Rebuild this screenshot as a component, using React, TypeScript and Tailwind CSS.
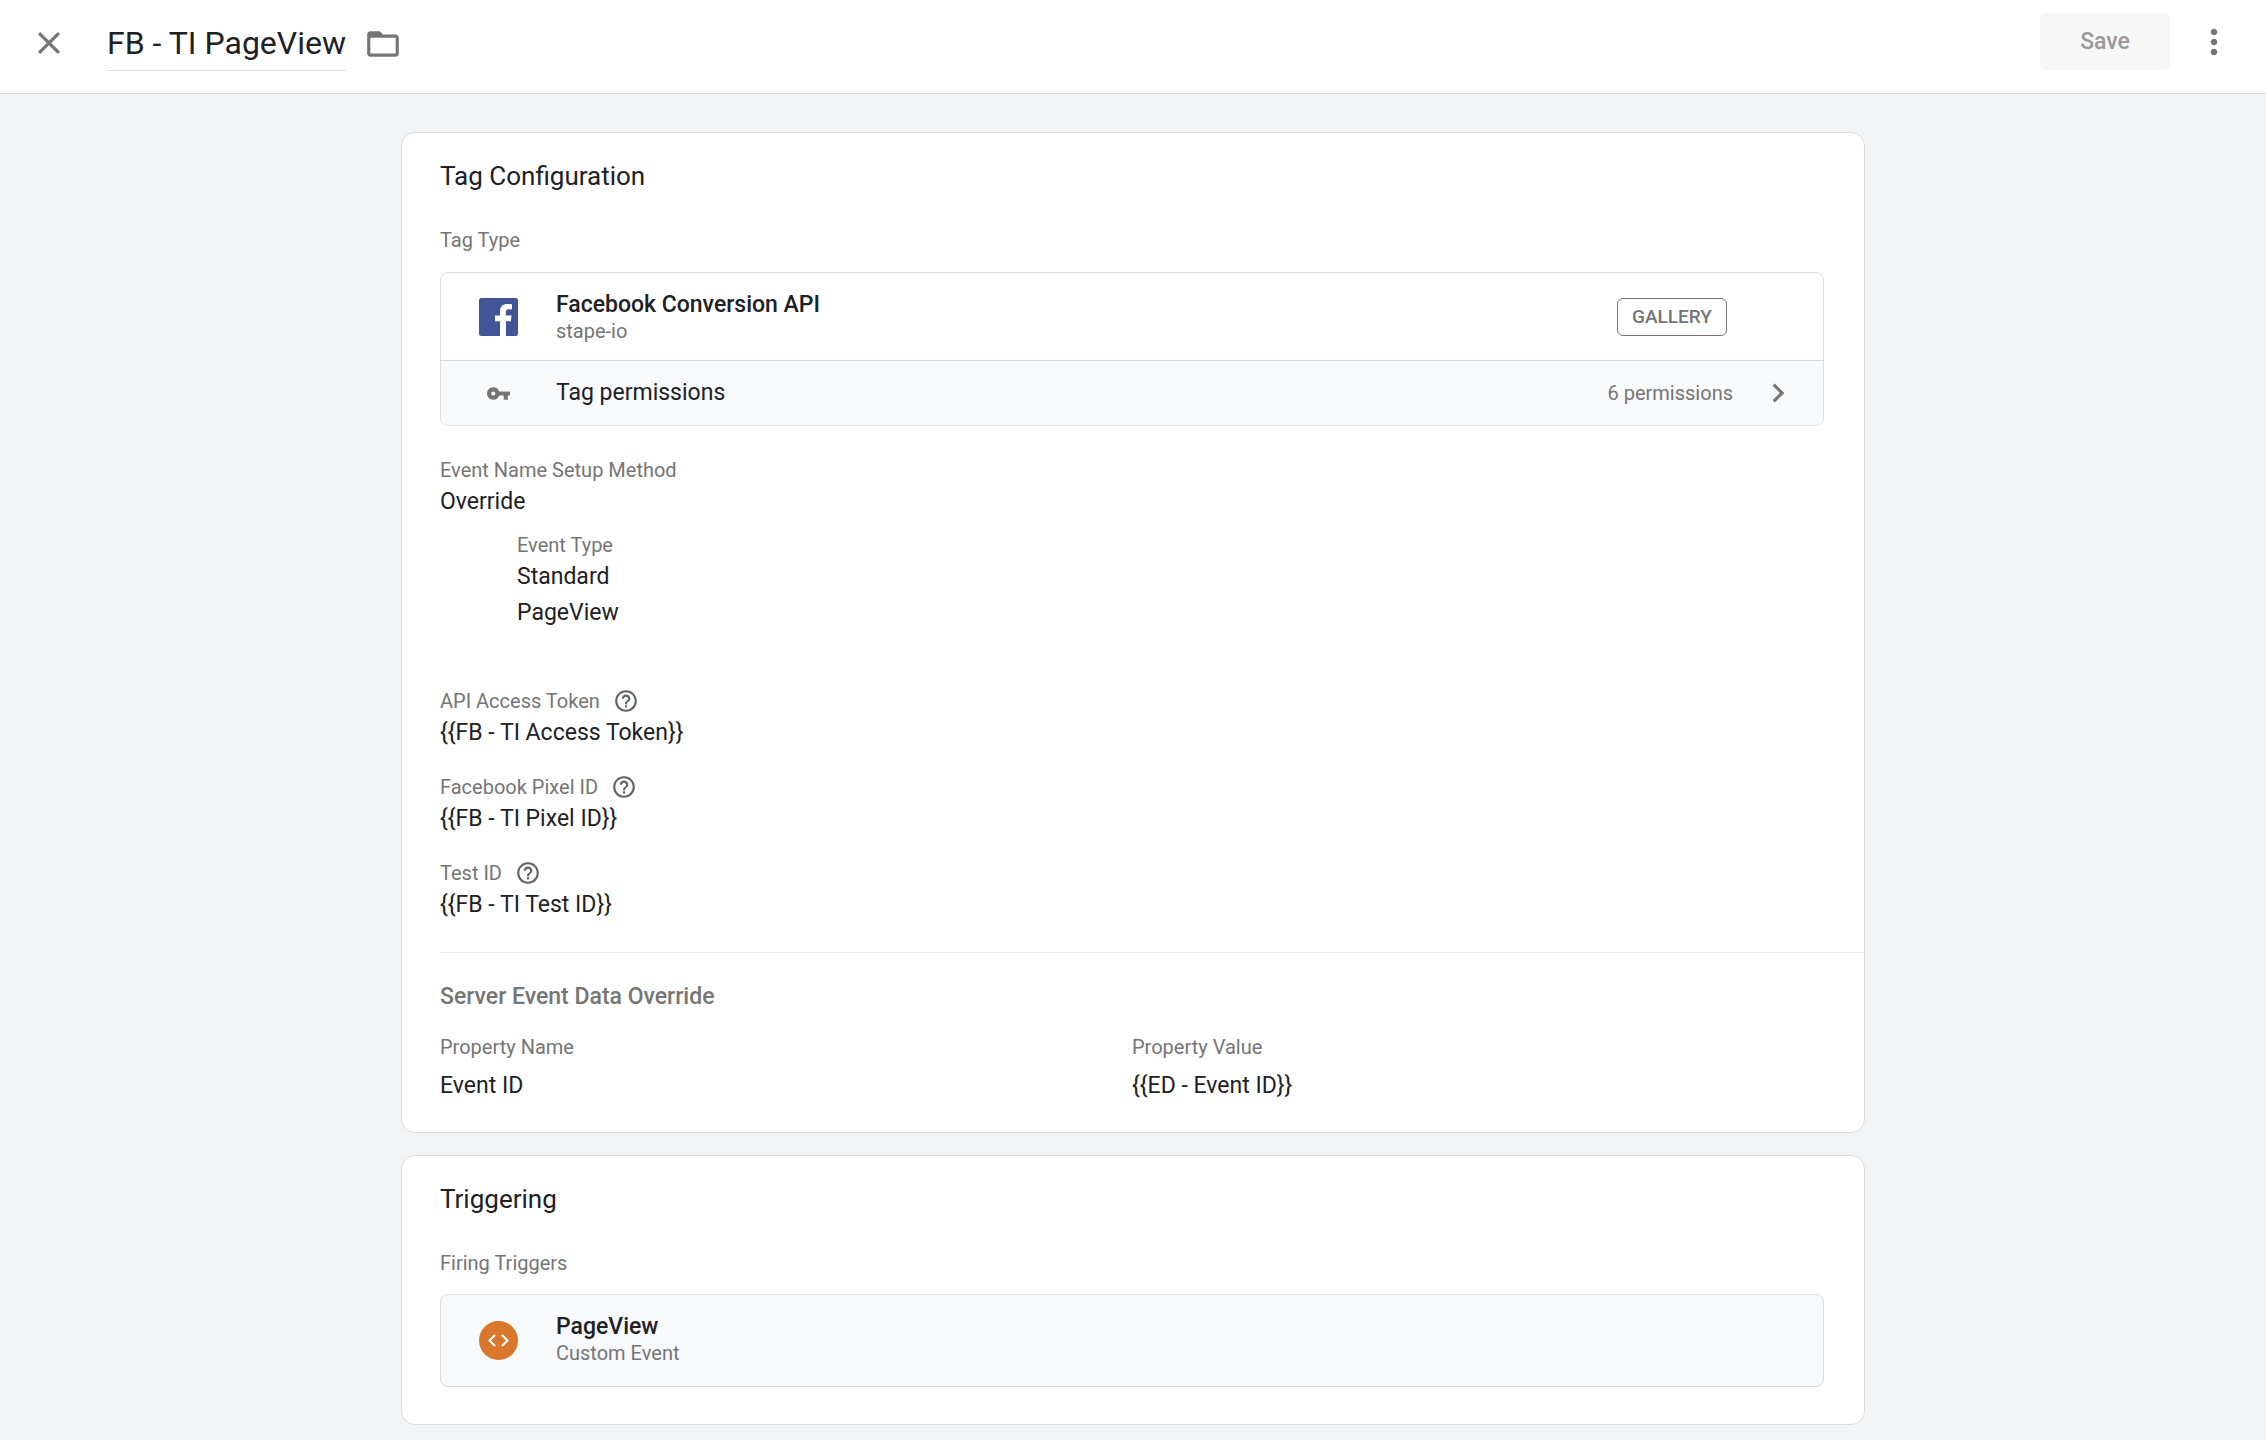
import type { ReactNode } from 'react'
import {
  MdChevronRight,
  MdClose,
  MdCode,
  MdFolderOpen,
  MdHelpOutline,
  MdMoreVert,
  MdVpnKey,
} from 'react-icons/md'

type FieldProps = {
  label: string
  values: string[]
  help?: boolean
  className?: string
}

const FIELDS: { label: string; value: string }[] = [
  { label: 'API Access Token', value: '{{FB - TI Access Token}}' },
  { label: 'Facebook Pixel ID', value: '{{FB - TI Pixel ID}}' },
  { label: 'Test ID', value: '{{FB - TI Test ID}}' },
]

const OVERRIDES: { name: string; value: string }[] = [
  { name: 'Event ID', value: '{{ED - Event ID}}' },
]

function FacebookLogo() {
  return (
    <svg viewBox="0 0 39 38" className="h-[38px] w-[39px]" aria-hidden="true">
      <rect width="39" height="38" rx="2.5" fill="#425596" />
      <path
        d="M21 38V23.2h-5v-5.6h5v-4.2C21 8.6 23.8 6 28.2 6c2.1 0 3.9.15 4.8.25v5h-3.1c-2.5 0-3 1.2-3 2.9v3.45h5.7l-.75 5.6H27V38z"
        fill="#fff"
      />
    </svg>
  )
}

function Card({ title, className = '', children }: { title: string; className?: string; children: ReactNode }) {
  return (
    <section className={`rounded-[14px] border border-[#dadce0] bg-white pt-[27px] pl-[38px] ${className}`}>
      <h2 className="text-[26px] leading-8 text-[#202124]">{title}</h2>
      {children}
    </section>
  )
}

function Field({ label, values, help = false, className = '' }: FieldProps) {
  return (
    <dl className={className}>
      <dt className="flex h-7 items-center gap-[13px] text-[20px] leading-7 text-[#757575]">
        {label}
        {help && (
          <button type="button" aria-label={`Help: ${label}`} className="text-[#5f6368]">
            <MdHelpOutline size={26} />
          </button>
        )}
      </dt>
      {values.map((value) => (
        <dd key={value} className="text-[23px] leading-9">
          {value}
        </dd>
      ))}
    </dl>
  )
}

export default function App() {
  return (
    <div className="min-h-screen bg-[#f1f3f4] font-[Roboto,sans-serif] text-[#202124]">
      <header className="flex h-[94px] items-start justify-between border-b border-[#dadce0] bg-white pr-8 pl-[30px]">
        <div className="flex items-start">
          <button type="button" aria-label="Close" className="mt-6 text-[#757575]">
            <MdClose size={38} />
          </button>
          <input
            type="text"
            aria-label="Tag name"
            defaultValue="FB - TI PageView"
            className="mt-4 ml-[39px] field-sizing-content h-[55px] border-b border-[#dadce0] text-[32px] outline-none"
          />
          <button type="button" aria-label="Move to folder" className="mt-[25px] ml-[18px] text-[#757575]">
            <MdFolderOpen size={38} />
          </button>
        </div>

        <div className="mt-[13px] flex items-center gap-6">
          <button
            type="button"
            disabled
            className="h-[57px] w-[130px] rounded-md bg-[#f7f7f7] pt-0.5 text-[23px] font-medium text-[#999999]"
          >
            Save
          </button>
          <button type="button" aria-label="More actions" className="text-[#757575]">
            <MdMoreVert size={40} />
          </button>
        </div>
      </header>

      <main className="mx-auto flex max-w-[1464px] flex-col gap-[22px] pt-[38px] pb-3">
        <Card title="Tag Configuration" className="pb-7">
          <p className="mt-[34px] text-[20px] leading-7 text-[#757575]">Tag Type</p>
          <div className="mt-[18px] mr-10 overflow-hidden rounded-lg border border-[#dadce0]">
            <div className="flex h-[87px] items-center pr-24 pl-[38px]">
              <FacebookLogo />
              <div className="ml-[38px] grow">
                <div className="text-[23px] leading-7 font-medium">Facebook Conversion API</div>
                <div className="text-[20px] leading-6 text-[#757575]">stape-io</div>
              </div>
              <span className="flex h-[38px] w-[110px] items-center justify-center rounded-md border border-[#757575] pt-0.5 text-[19px] font-medium text-[#757575]">
                GALLERY
              </span>
            </div>
            <button
              type="button"
              className="flex h-[65px] w-full items-center border-t border-[#dadce0] bg-[#f8f9fb] pr-[26px] pl-[38px] text-left"
            >
              <span className="flex w-[39px] justify-center text-[#757575]">
                <MdVpnKey size={25} />
              </span>
              <span className="ml-[38px] grow text-[23px]">Tag permissions</span>
              <span className="text-[20px] text-[#757575]">6 permissions</span>
              <MdChevronRight size={38} className="ml-[26px] text-[#757575]" />
            </button>
          </div>

          <Field label="Event Name Setup Method" values={['Override']} className="mt-[30px]" />
          <Field label="Event Type" values={['Standard', 'PageView']} className="mt-[11px] ml-[77px]" />

          <div className="mt-14 flex flex-col gap-[22px]">
            {FIELDS.map((field) => (
              <Field key={field.label} label={field.label} values={[field.value]} help />
            ))}
          </div>

          <div className="mt-[29px] border-t border-[#e8eaed] pt-7">
            <h3 className="text-[23px] leading-8 font-medium text-[#757575]">Server Event Data Override</h3>
            <table className="mt-5 w-full table-fixed text-left">
              <thead>
                <tr className="text-[20px] leading-7 text-[#757575]">
                  <th className="w-[692px] p-0 font-normal">Property Name</th>
                  <th className="p-0 font-normal">Property Value</th>
                </tr>
              </thead>
              <tbody>
                {OVERRIDES.map((row) => (
                  <tr key={row.name} className="text-[23px] leading-9">
                    <td className="pt-[7px]">{row.name}</td>
                    <td className="pt-[7px]">{row.value}</td>
                  </tr>
                ))}
              </tbody>
            </table>
          </div>
        </Card>

        <Card title="Triggering" className="pb-[37px]">
          <p className="mt-[34px] text-[20px] leading-7 text-[#757575]">Firing Triggers</p>
          <div className="mt-[17px] mr-10 flex h-[93px] items-center rounded-lg border border-[#dadce0] bg-[#f8f9fb] pl-[38px]">
            <span className="flex size-[39px] items-center justify-center rounded-full bg-[#d9782d] text-white">
              <MdCode size={25} />
            </span>
            <div className="ml-[38px] pb-1">
              <div className="text-[23px] leading-7 font-medium">PageView</div>
              <div className="text-[20px] leading-6 text-[#757575]">Custom Event</div>
            </div>
          </div>
        </Card>
      </main>
    </div>
  )
}
